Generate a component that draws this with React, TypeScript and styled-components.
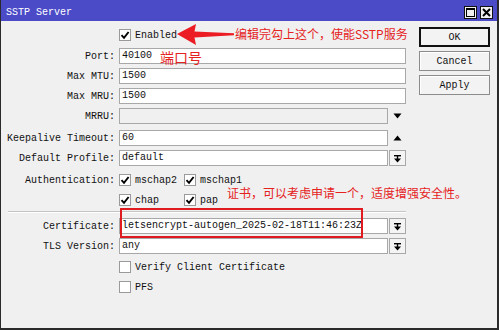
import React from 'react';
import styled, { createGlobalStyle } from 'styled-components';

const GlobalStyle = createGlobalStyle`
  html, body {
    margin: 0;
    padding: 0;
    background: #f0f0f0;
  }
`;

const Window = styled.div`
  position: relative;
  width: 499px;
  height: 330px;
  box-sizing: border-box;
  background: #f0f0f0;
  border-left: 1px solid #2a2a2a;
  border-right: 2px solid #2a2a2a;
  border-bottom: 2px solid #2a2a2a;
  display: flex;
  flex-direction: column;
  font-family: "Liberation Mono", "DejaVu Sans Mono", monospace;
  font-size: 10px;
  color: #111111;
  overflow: hidden;
`;

const TitleBar = styled.div`
  height: 21px;
  box-sizing: border-box;
  background: #4b4bc8;
  color: #ffffff;
  display: flex;
  align-items: flex-end;
  justify-content: space-between;
  padding: 0 4px 2px 5px;
`;

const Title = styled.span`
  line-height: 13px;
  font-size: 10px;
`;

const TitleButtons = styled.div`
  display: flex;
  gap: 3px;
`;

const TitleButton = styled.div`
  width: 13px;
  height: 13px;
  box-sizing: border-box;
  background: #f0f0f0;
  border: 1px solid #111;
  display: flex;
  align-items: center;
  justify-content: center;
`;

const Body = styled.div`
  flex: 1;
  display: flex;
  padding-top: 4px;
`;

const Form = styled.div`
  width: 405px;
  display: flex;
  flex-direction: column;
`;

const Row = styled.div<{ $mt?: number }>`
  display: grid;
  grid-template-columns: 114px 287px;
  column-gap: 4px;
  height: 20px;
  align-items: center;
  margin-top: ${(p) => p.$mt ?? 0}px;
`;

const Label = styled.div`
  text-align: right;
  white-space: nowrap;
`;

const Input = styled.div<{ $disabled?: boolean; $width?: number }>`
  width: ${(p) => (p.$width ? `${p.$width}px` : '100%')};
  height: 16px;
  box-sizing: border-box;
  background: ${(p) => (p.$disabled ? '#f0f0f0' : '#ffffff')};
  border: 1px solid #a8a8a8;
  padding-left: 2px;
  line-height: 14px;
  white-space: nowrap;
  overflow: hidden;
`;

const Combo = styled.div`
  display: flex;
  align-items: center;
  gap: 1px;
`;

const IconSlot = styled.div`
  width: 17px;
  height: 16px;
  display: flex;
  align-items: center;
  justify-content: center;
`;

const DropButton = styled(IconSlot)`
  box-sizing: border-box;
  border: 1px solid #a8a8a8;
  background: #f4f4f4;
`;

const Checks = styled.div`
  display: flex;
  align-items: center;
`;

const CheckItem = styled.div<{ $width?: number }>`
  display: flex;
  align-items: center;
  gap: 4px;
  width: ${(p) => (p.$width ? `${p.$width}px` : 'auto')};
  white-space: nowrap;
`;

const Box = styled.div`
  width: 12px;
  height: 12px;
  box-sizing: border-box;
  border: 1px solid #9a9a9a;
  background: #ffffff;
  display: flex;
  align-items: center;
  justify-content: center;
`;

const Separator = styled.div`
  width: 398px;
  height: 1px;
  background: #c4c4c4;
  border-bottom: 1px solid #ffffff;
  margin: 1px 0 3px 7px;
`;

const Buttons = styled.div`
  margin-left: 13px;
  width: 71px;
  padding-top: 2px;
  display: flex;
  flex-direction: column;
  gap: 4px;
`;

const Button = styled.div<{ $primary?: boolean }>`
  height: 20px;
  box-sizing: border-box;
  border: ${(p) => (p.$primary ? '2px solid #111' : '1px solid #8c8c8c')};
  background: #f3f3f3;
  box-shadow: ${(p) => (p.$primary ? 'none' : 'inset 1px 1px 0 #ffffff')};
  display: flex;
  align-items: center;
  justify-content: center;
`;

const Note = styled.div<{ $size: number }>`
  position: absolute;
  color: #e5221d;
  font-family: "Noto Sans CJK SC", "Noto Sans", sans-serif;
  font-size: ${(p) => p.$size}px;
  line-height: 1;
  white-space: nowrap;
`;

const Highlight = styled.div`
  position: absolute;
  left: 119px;
  top: 208px;
  width: 243px;
  height: 30px;
  box-sizing: border-box;
  border: 2px solid #e01b1f;
`;

const ArrowSvg = styled.svg`
  position: absolute;
  left: 175px;
  top: 22px;
`;

const Check = () => (
  <svg width="10" height="10" viewBox="0 0 10 10">
    <path d="M1.5 5.2 L4 7.8 L8.6 2" fill="none" stroke="#000" strokeWidth="1.9" />
  </svg>
);

const CheckBox: React.FC<{ checked?: boolean; label: string; width?: number }> = ({ checked, label, width }) => (
  <CheckItem $width={width}>
    <Box>{checked && <Check />}</Box>
    <span>{label}</span>
  </CheckItem>
);

const DropIcon = () => (
  <svg width="9" height="9" viewBox="0 0 9 9">
    <rect x="1" y="1" width="7" height="1.4" fill="#000" />
    <rect x="3.8" y="2" width="1.4" height="3" fill="#000" />
    <path d="M1 4.5 H8 L4.5 8.5 Z" fill="#000" />
  </svg>
);

const Triangle: React.FC<{ up?: boolean }> = ({ up }) => (
  <svg width="9" height="6" viewBox="0 0 9 6">
    <path d={up ? 'M0.5 5.5 H8.5 L4.5 0.5 Z' : 'M0.5 0.5 H8.5 L4.5 5.5 Z'} fill="#000" />
  </svg>
);

const App: React.FC = () => {
  return (
    <Window>
      <GlobalStyle />
      <TitleBar>
        <Title>SSTP Server</Title>
        <TitleButtons>
          <TitleButton>
            <svg width="9" height="9" viewBox="0 0 9 9">
              <rect x="0.5" y="0.5" width="8" height="8" fill="none" stroke="#000" />
              <rect x="0.5" y="0.5" width="8" height="1.5" fill="#000" />
            </svg>
          </TitleButton>
          <TitleButton>
            <svg width="9" height="9" viewBox="0 0 9 9">
              <path d="M1 1 L8 8 M8 1 L1 8" stroke="#000" strokeWidth="2" />
            </svg>
          </TitleButton>
        </TitleButtons>
      </TitleBar>
      <Body>
        <Form>
          <Row>
            <Label />
            <CheckBox checked label="Enabled" />
          </Row>
          <Row $mt={1}>
            <Label>Port:</Label>
            <Input>40100</Input>
          </Row>
          <Row>
            <Label>Max MTU:</Label>
            <Input>1500</Input>
          </Row>
          <Row>
            <Label>Max MRU:</Label>
            <Input>1500</Input>
          </Row>
          <Row>
            <Label>MRRU:</Label>
            <Combo>
              <Input $disabled $width={269} />
              <IconSlot>
                <Triangle />
              </IconSlot>
            </Combo>
          </Row>
          <Row $mt={2}>
            <Label>Keepalive Timeout:</Label>
            <Combo>
              <Input $width={269}>60</Input>
              <IconSlot>
                <Triangle up />
              </IconSlot>
            </Combo>
          </Row>
          <Row>
            <Label>Default Profile:</Label>
            <Combo>
              <Input $width={269}>default</Input>
              <DropButton>
                <DropIcon />
              </DropButton>
            </Combo>
          </Row>
          <Row $mt={2}>
            <Label>Authentication:</Label>
            <Checks>
              <CheckBox checked label="mschap2" width={65} />
              <CheckBox checked label="mschap1" />
            </Checks>
          </Row>
          <Row>
            <Label />
            <Checks>
              <CheckBox checked label="chap" width={65} />
              <CheckBox checked label="pap" />
            </Checks>
          </Row>
          <Separator />
          <Row>
            <Label>Certificate:</Label>
            <Combo>
              <Input $width={269}>letsencrypt-autogen_2025-02-18T11:46:23Z</Input>
              <DropButton>
                <DropIcon />
              </DropButton>
            </Combo>
          </Row>
          <Row>
            <Label>TLS Version:</Label>
            <Combo>
              <Input $width={269}>any</Input>
              <DropButton>
                <DropIcon />
              </DropButton>
            </Combo>
          </Row>
          <Row $mt={1}>
            <Label />
            <CheckBox label="Verify Client Certificate" />
          </Row>
          <Row>
            <Label />
            <CheckBox label="PFS" />
          </Row>
        </Form>
        <Buttons>
          <Button $primary>OK</Button>
          <Button>Cancel</Button>
          <Button>Apply</Button>
        </Buttons>
      </Body>

      <ArrowSvg width="60" height="26" viewBox="0 0 60 26">
        <path d="M1 12 L20 2 L18.5 9.5 L58 11.2 L58 13.2 L18.5 15.5 L20 23 Z" fill="#ec1c24" />
      </ArrowSvg>
      <Note $size={12} style={{ left: 234, top: 28 }}>编辑完勾上这个，使能SSTP服务</Note>
      <Note $size={14} style={{ left: 159, top: 50 }}>端口号</Note>
      <Note $size={12} style={{ left: 226, top: 187 }}>证书，可以考虑申请一个，适度增强安全性。</Note>
      <Highlight />
    </Window>
  );
};

export default App;
